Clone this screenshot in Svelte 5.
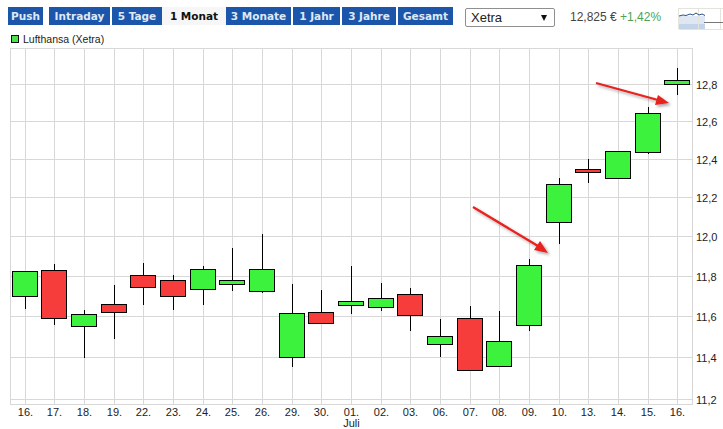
<script>
	const tabs = [
		{ label: 'Push', w: 35 },
		{ label: 'Intraday', w: 61 },
		{ label: '5 Tage', w: 50 },
		{ label: '1 Monat', w: 64, active: true },
		{ label: '3 Monate', w: 65 },
		{ label: '1 Jahr', w: 47 },
		{ label: '3 Jahre', w: 54 },
		{ label: 'Gesamt', w: 55 }
	];

	// x = grid line, l = body left edge, t/b = body top and bottom, hi/lo = wick ends
	const candles = [
		{ d: '16.', x: 25, l: 12, t: 271, b: 296, hi: 271, lo: 309, up: true },
		{ d: '17.', x: 54, l: 41, t: 270, b: 318, hi: 264, lo: 325 },
		{ d: '18.', x: 84, l: 71, t: 314, b: 326, hi: 310, lo: 358, up: true },
		{ d: '19.', x: 114, l: 101, t: 304, b: 312, hi: 285, lo: 339 },
		{ d: '22.', x: 143, l: 130, t: 275, b: 287, hi: 263, lo: 305 },
		{ d: '23.', x: 173, l: 160, t: 280, b: 296, hi: 275, lo: 310 },
		{ d: '24.', x: 203, l: 190, t: 269, b: 289, hi: 266, lo: 305, up: true },
		{ d: '25.', x: 232, l: 219, t: 280, b: 284, hi: 248, lo: 291, up: true },
		{ d: '26.', x: 262, l: 249, t: 269, b: 291, hi: 234, lo: 293, up: true },
		{ d: '29.', x: 292, l: 279, t: 313, b: 357, hi: 284, lo: 367, up: true },
		{ d: '30.', x: 321, l: 308, t: 312, b: 323, hi: 290, lo: 323 },
		{ d: '01.', x: 351, l: 338, t: 301, b: 305, hi: 266, lo: 314, up: true },
		{ d: '02.', x: 381, l: 368, t: 298, b: 307, hi: 283, lo: 311, up: true },
		{ d: '03.', x: 410, l: 397, t: 294, b: 315, hi: 288, lo: 331 },
		{ d: '06.', x: 440, l: 427, t: 336, b: 344, hi: 319, lo: 357, up: true },
		{ d: '07.', x: 470, l: 457, t: 318, b: 370, hi: 306, lo: 370 },
		{ d: '08.', x: 499, l: 486, t: 341, b: 366, hi: 311, lo: 367, up: true },
		{ d: '09.', x: 529, l: 516, t: 265, b: 325, hi: 259, lo: 331, up: true },
		{ d: '10.', x: 559, l: 546, t: 184, b: 222, hi: 178, lo: 244, up: true },
		{ d: '13.', x: 588, l: 575, t: 169, b: 172, hi: 159, lo: 183 },
		{ d: '14.', x: 618, l: 605, t: 151, b: 178, hi: 151, lo: 178, up: true },
		{ d: '15.', x: 648, l: 635, t: 113, b: 152, hi: 107, lo: 154, up: true },
		{ d: '16.', x: 677, l: 664, t: 80, b: 84, hi: 68, lo: 95, up: true }
	];

	const levels = [
		{ v: '12,8', y: 84 },
		{ v: '12,6', y: 121 },
		{ v: '12,4', y: 159 },
		{ v: '12,2', y: 197 },
		{ v: '12,0', y: 236 },
		{ v: '11,8', y: 276 },
		{ v: '11,6', y: 316 },
		{ v: '11,4', y: 357 },
		{ v: '11,2', y: 399 }
	];
</script>

<div class="page">
	<div class="toolbar">
		<nav class="tabs">
			{#each tabs as tab}
				<span class="tab" class:active={tab.active} style="width: {tab.w}px">{tab.label}</span>
			{/each}
		</nav>
		<div class="select">
			<span>Xetra</span>
			<i></i>
		</div>
		<div class="quote">12,825 € <b>+1,42%</b></div>
		<svg class="mini" width="45" height="30" viewBox="0 0 45 30">
			<rect x="1" y="16" width="26" height="8" fill="#dfe7f3" />
			<rect x="1" y="24" width="26" height="5" fill="#c3d3e9" />
			<path d="M0.5 8.5H45M0.5 8V29M20.5 8V29M42.5 8V29M1 29.5H45" stroke="#e4e4dc" fill="none" />
			<path d="M26 22.5H45" stroke="#777" fill="none" />
			<path d="M1 16L5 15 8 15.5 12 14 15 15 18 13 21 15 24 14 27 15.5" stroke="#2f4f86" fill="none" />
		</svg>
	</div>

	<div class="legend"><i></i>Lufthansa (Xetra)</div>

	<svg class="chart" width="723" height="429" viewBox="0 0 723 429">
		<defs>
			<filter id="soft" x="-20%" y="-40%" width="140%" height="200%">
				<feDropShadow dx="2" dy="2" stdDeviation="1.5" flood-color="#000" flood-opacity="0.35" />
			</filter>
		</defs>

		<rect class="frame" x="10.5" y="48.5" width="682" height="356" />
		{#each levels as l}
			<line class="grid" x1="10" x2="692" y1={l.y + 0.5} y2={l.y + 0.5} />
			<text class="tick" x="696" y={l.y + 5}>{l.v}</text>
		{/each}

		{#each candles as c}
			<line class="grid" x1={c.x + 0.5} x2={c.x + 0.5} y1="48" y2="404" />
		{/each}

		{#each candles as c}
			<line class="wick" x1={c.x + 0.5} x2={c.x + 0.5} y1={c.hi} y2={c.lo} />
			<rect
				class="body"
				class:up={c.up}
				x={c.l + 0.5}
				y={c.t + 0.5}
				width="25"
				height={c.b - c.t}
			/>
			<text class="day" x={c.x + 0.5} y="416">{c.d}</text>
		{/each}
		<text class="day" x="351.5" y="427">Juli</text>

		<g class="arrow" filter="url(#soft)">
			<line x1="473" y1="207" x2="538" y2="246" />
			<polygon points="548,253 534,250 540,241" />
		</g>
		<g class="arrow" filter="url(#soft)">
			<line x1="596" y1="83" x2="658" y2="100" />
			<polygon points="669,103 655,105 658,95" />
		</g>
	</svg>
</div>

<style>
	:global(body) {
		margin: 0;
		background: #fff;
	}

	.page {
		position: relative;
		width: 723px;
		height: 429px;
		overflow: hidden;
		font-family: 'Liberation Sans', Arial, sans-serif;
	}

	.toolbar {
		display: flex;
		align-items: flex-start;
		padding: 7px 0 0 8px;
	}

	.tabs {
		display: flex;
		gap: 2px;
	}

	.tab {
		height: 18px;
		text-align: center;
		background: #1c56ab;
		color: #dfe9f6;
		font: bold 10.5px/18px 'DejaVu Sans', Verdana, sans-serif;
		white-space: nowrap;
	}

	.tab:first-child {
		margin-right: 4px;
	}

	.tab.active {
		margin: 0 -2px;
		background: #f6f6f6;
		color: #111;
	}

	.select {
		display: flex;
		align-items: center;
		justify-content: space-between;
		box-sizing: border-box;
		width: 90px;
		height: 19px;
		margin: 1px 0 0 12px;
		padding: 0 5px;
		border: 1px solid #8f8f8f;
		border-radius: 2px;
		font-size: 13px;
		color: #222;
	}

	.select i {
		width: 0;
		height: 0;
		margin-right: 2px;
		border: 3.5px solid transparent;
		border-top: 6px solid #111;
		border-bottom: 0;
	}

	.quote {
		margin: 2px 0 0 15px;
		font-size: 12px;
		line-height: 16px;
		color: #444;
		white-space: nowrap;
	}

	.quote b {
		font-weight: normal;
		color: #4fa24f;
	}

	.mini {
		position: absolute;
		left: 678px;
		top: 0;
	}

	.legend {
		display: flex;
		align-items: center;
		gap: 4px;
		margin: 5px 0 0 11px;
		font-size: 10.5px;
		line-height: 14px;
		color: #222;
	}

	.legend i {
		box-sizing: border-box;
		width: 8px;
		height: 8px;
		border: 1px solid #111;
		background: #4fe04f;
	}

	.chart {
		position: absolute;
		left: 0;
		top: 0;
	}

	.frame {
		fill: #fff;
		stroke: #d8d8d8;
	}

	.grid {
		stroke: #d8d8d8;
	}

	.wick {
		stroke: #000;
	}

	.body {
		fill: #f73c3c;
		stroke: #000;
	}

	.body.up {
		fill: #3df23d;
	}

	.tick,
	.day {
		font-size: 11px;
		fill: #222;
	}

	.day {
		text-anchor: middle;
	}

	.arrow line {
		stroke: #e8201f;
		stroke-width: 2.2;
	}

	.arrow polygon {
		fill: #e8201f;
	}
</style>
